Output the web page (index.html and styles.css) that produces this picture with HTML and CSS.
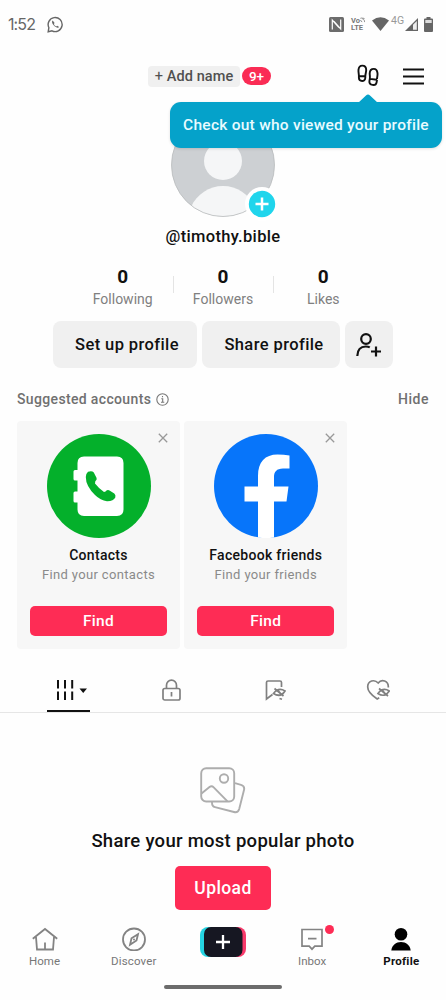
FILE: index.html
```
<!DOCTYPE html>
<html lang="en">
<head>
<meta charset="utf-8">
<title>Profile</title>
<link rel="stylesheet" href="styles.css">
</head>
<body>
<div class="screen">
  <header class="status">
    <div class="status-left">
      <span class="clock">1:52</span>
      <svg width="17" height="17" viewBox="0 0 17 17" fill="none" stroke="#666" stroke-width="1.400"><path d="M1.200 15.700l.7-4A7 7 0 1 1 5 14.800z"/><path d="M5.700 4.600c-1.200.8-.8 2.900 1.200 4.900s4.300 2.900 5.200 1.400l-1.900-1.200-1 .8C8 9.900 7.200 9 6.800 8l.8-.9z" fill="#666" stroke="none"/></svg>
    </div>
    <div class="status-right">
      <svg width="15" height="15" viewBox="0 0 15 15"><rect width="15" height="15" rx="1.500" fill="#6c6c6c"/><path d="M3.300 12.500V3L10 10.500M11.700 2.500V12L5 4.500" fill="none" stroke="#fff" stroke-width="1.200"/></svg>
      <div class="volte"><span>Vo<svg width="5" height="6" viewBox="0 0 6 6" fill="none" stroke="#777" stroke-width="1"><path d="M.5 1l1.500-.5L5.500 4v1.500M.5 3l2 2.500M3 .5l2.500 1"/></svg></span><span>LTE</span></div>
      <svg class="wifi" width="17" height="14" viewBox="0 0 17 14"><path d="M0 3.500Q8.500-3 17 3.500L8.500 14z" fill="#666"/></svg>
      <span class="network">4G</span>
      <svg class="signal" width="13" height="13" viewBox="0 0 13 13"><path d="M0 13L13 0V13z" fill="#666"/><path d="M8 6.800L11.800 3V11.800H8z" fill="#eee"/></svg>
      <svg class="battery" width="9" height="15" viewBox="0 0 9 15"><path d="M2.500 0h4v1.500H8q1 0 1 1V14q0 1-1 1H1q-1 0-1-1V2.500q0-1 1-1h1.500z" fill="#666"/><path d="M1.300 3h6.400v3H1.300z" fill="#ddd"/></svg>
    </div>
  </header>

  <div class="topbar">
    <div class="topbar-name"><span class="add-name"><span class="plus">+</span> Add name</span><span class="count">9+</span></div>
    <div class="topbar-actions">
      <svg width="22" height="24" viewBox="0 0 22 24" fill="none" stroke="#111" stroke-width="1.900"><path d="M1.900 12.200C2 10 1.200 8 1.500 5.600 1.800 3.200 3.200 1.600 5.300 1.600c2.400 0 3.900 2 3.900 4.500 0 2.200-.8 3.400-.9 6.100M1.900 12.200h6.400M1.900 12.200v1.600c0 4.200 6.400 4.200 6.400 0v-1.600"/><path d="M20 15.200c0-2.300.8-3.700.5-6.100-.3-2.400-1.700-4.200-3.700-4.200-2.400 0-4 2-4.100 4.500 0 2.100.5 3.300.1 5.500M12.800 14.900l7.200.9M12.800 14.900l-.4 2.200c-.5 4.300 6.400 5.500 7.200 1.200l.4-2.500"/></svg>
      <svg width="21" height="17" viewBox="0 0 21 17" stroke="#111" stroke-width="2"><path d="M0 1.500h21M0 8.500h21M0 15.500h21"/></svg>
    </div>
    <div class="tooltip">Check out who viewed your profile<svg class="tooltip-arrow" width="20" height="9" viewBox="0 0 20 9"><path d="M0 9L8 1.500Q10-.5 12 1.500L20 9z" fill="#05a2ca"/></svg></div>
  </div>

  <section class="identity">
    <div class="avatar">
      <svg width="104" height="104" viewBox="0 0 104 104"><defs><clipPath id="face"><circle cx="52" cy="52" r="51.500"/></clipPath></defs><g clip-path="url(#face)"><rect width="104" height="104" fill="#cdd0d3"/><circle cx="52" cy="48" r="19" fill="#f5f6f7"/><path d="M20 94C26 81 38 73 52 73S78 81 84 94V106H20z" fill="#f5f6f7"/></g><circle cx="52" cy="52" r="51.500" fill="none" stroke="#b9bbbd" stroke-width=".8"/></svg>
      <svg class="avatar-plus" width="34" height="34" viewBox="0 0 34 34"><circle cx="17" cy="17" r="17" fill="#fff"/><circle cx="17" cy="17" r="13.200" fill="#20d5ec"/><path d="M10.500 17h13M17 10.500v13" stroke="#fff" stroke-width="2.500"/></svg>
    </div>
    <div class="handle">@timothy.bible</div>
    <div class="stats">
      <div class="stat"><b>0</b><span>Following</span></div>
      <div class="stat"><b>0</b><span>Followers</span></div>
      <div class="stat"><b>0</b><span>Likes</span></div>
    </div>
    <div class="actions">
      <div class="btn btn-setup">Set up profile</div>
      <div class="btn btn-share">Share profile</div>
      <div class="btn btn-add"><svg width="26" height="24" viewBox="0 0 26 24" fill="none" stroke="#111" stroke-width="2.200"><circle cx="10" cy="6" r="4.800"/><path d="M1.300 23c.2-6 3.400-9.500 8.500-9.500 1.600 0 2.900.3 4 .9M15 18.500h10M20 13.500v10"/></svg></div>
    </div>
  </section>

  <section class="suggested">
    <div class="suggested-head">
      <span class="suggested-title">Suggested accounts</span>
      <svg width="13" height="13" viewBox="0 0 13 13" fill="none" stroke="#777" stroke-width="1.100"><circle cx="6.500" cy="6.500" r="5.700"/><path d="M5.300 5.800h1.400v3.300M5 9.300h3.300M6.500 3v1.300"/></svg>
      <span class="hide">Hide</span>
    </div>
    <div class="cards">
      <div class="card">
        <svg class="close" width="10" height="10" viewBox="0 0 10 10" stroke="#999" stroke-width="1.300"><path d="M.8.8l8.400 8.400M9.200.8L.8 9.200"/></svg>
        <svg width="104" height="104" viewBox="0 0 104 104"><circle cx="52" cy="52" r="52" fill="#04b02b"/><path d="M37 22.500H70q6.500 0 6.500 6.500V75.500q0 6.500-6.500 6.500H37q-6.500 0-6.500-6.500V68.500H28q-1.500 0-1.500-1.500V59q0-1.500 1.500-1.500H30.500V46.500H28q-1.500 0-1.500-1.500V37.500q0-1.500 1.500-1.500H30.500V29q0-6.500 6.500-6.500z" fill="#fff"/><path d="M41 37.800Q45 36.500 46.800 38.500L49.600 44Q50.200 46 48.300 47.300L48 49.500Q52 54.700 57 58L58.500 57.500Q60.500 55.400 62.500 56.500L67.300 59.500Q69 61 68.300 63.500 66.500 67.300 60 67.200 53.500 66.500 48 61 38.800 52 38.800 43 39 39.500 41 37.800z" fill="#04b02b"/></svg>
        <b class="card-name">Contacts</b>
        <span class="card-sub">Find your contacts</span>
        <div class="find">Find</div>
      </div>
      <div class="card">
        <svg class="close" width="10" height="10" viewBox="0 0 10 10" stroke="#999" stroke-width="1.300"><path d="M.8.8l8.400 8.400M9.200.8L.8 9.200"/></svg>
        <svg width="104" height="104" viewBox="0 0 104 104"><circle cx="52" cy="52" r="52" fill="#0775fa"/><path d="M44 103.500V67.500H30.500V52.500H44V42C44 28 51 20.500 63.500 20.500Q70 20.500 75.500 21.500V34.500H69C62.500 34.500 60 38 60 43V52.500H74.500L72.500 67.500H60V103.500Q52 104.500 44 103.500z" fill="#fff"/></svg>
        <b class="card-name">Facebook friends</b>
        <span class="card-sub">Find your friends</span>
        <div class="find">Find</div>
      </div>
    </div>
  </section>

  <nav class="tabs">
    <div class="tab active"><svg width="34" height="20" viewBox="0 0 34 20" fill="#111"><path d="M1 0h2v8.500H1zM8 0h2v8.500H8zM15.200 0h2v8.500H15.200zM1 11.500h2v8.500H1zM8 11.500h2v8.500H8zM15.200 11.500h2v8.500H15.200zM23.500 8.500h7.500L27.200 13z"/></svg></div>
    <div class="tab"><svg width="19" height="22" viewBox="0 0 19 22" fill="none" stroke="#808080" stroke-width="1.700"><rect x="1" y="9.500" width="17" height="11.500" rx="1.800"/><path d="M4.500 9.500V6.200a5 5 0 0 1 10 0v3.300M9.500 13v4.500"/></svg></div>
    <div class="tab"><svg width="22" height="22" viewBox="0 0 22 22" fill="none" stroke="#808080" stroke-width="1.700"><path d="M17.500 8V3.500q0-1.500-1.500-1.500H4Q2.500 2 2.500 3.500V20L8.500 15.500"/><path d="M9.500 14.500q5-6.500 11.500-2.500-4.500 7-11.500 2.500zM10.500 9.500l9 7.500M14 11.500l3.500 4M15.500 19.500l2.500.8"/></svg></div>
    <div class="tab"><svg width="24" height="22" viewBox="0 0 24 22" fill="none" stroke="#808080" stroke-width="1.700"><path d="M22.300 8.500C22.800 1.500 15.500-.5 12.200 4 8.500 0 1.700 1.500 1.700 8c0 5 5 9 9.500 12l2-1.200"/><path d="M12 14.500q4.800-6.500 11.300-2.500-4.500 7-11.300 2.500zM13 9.500l9 7.500M16.500 11.500l3.500 4"/></svg></div>
  </nav>

  <main class="empty">
    <svg width="46" height="47" viewBox="0 0 46 47" fill="none" stroke="#adadad" stroke-width="1.900"><rect x="1.200" y="1.200" width="33" height="33.300" rx="5"/><circle cx="24" cy="11.500" r="4.200"/><path d="M1.500 26.500L9.500 20q2.200-1.700 4.200.3L27.500 34.300M35 16.200l6 1.700q4 1.200 3 5.200L39.200 42q-1.200 4-5.200 3L15 40.200q-3.200-.8-3-5.200"/></svg>
    <div class="empty-title">Share your most popular photo</div>
    <div class="upload">Upload</div>
  </main>

  <footer class="nav">
    <div class="nav-item"><svg width="26" height="24" viewBox="0 0 26 24" fill="none" stroke="#838383" stroke-width="1.800"><path d="M.8 11.800L13 2l12.200 9.800M4 10l1 12.500h16l1-12.500M13 15.500v7"/></svg><span>Home</span></div>
    <div class="nav-item discover"><svg width="24" height="24" viewBox="0 0 24 24" fill="none" stroke="#838383" stroke-width="1.800"><circle cx="12" cy="12.500" r="11"/><path d="M16 7.200L14.500 13.500 8 17.800 9.500 11.200z"/><circle cx="12" cy="12.500" r="1" fill="#838383" stroke="none"/></svg><span>Discover</span></div>
    <div class="nav-item create"><svg width="46" height="30" viewBox="0 0 46 30"><rect width="38" height="30" rx="8" fill="#25d4e2"/><rect x="8" width="38" height="30" rx="8" fill="#f83a6b"/><rect x="4" width="38.500" height="30" rx="7" fill="#161722"/><path d="M16 15h14M23 8v14" stroke="#fff" stroke-width="2.300"/></svg></div>
    <div class="nav-item inbox"><svg width="22" height="24" viewBox="0 0 22 24" fill="none" stroke="#838383" stroke-width="1.700"><path d="M1 2.500h20v16.700h-7.200L11 22.200 8.200 19.200H1zM7 11.700h8.500"/></svg><span>Inbox</span><i class="dot"></i></div>
    <div class="nav-item current"><svg width="20" height="24" viewBox="0 0 20 24"><circle cx="10" cy="7.200" r="6.300"/><path d="M.3 23.500C1 18 5 15 10 15s9 3 9.700 8.500z"/></svg><span>Profile</span></div>
  </footer>
  <div class="home-bar"></div>
</div>
</body>
</html>
```
FILE: styles.css
```
* { box-sizing: border-box; }
body { margin: 0; background: #fefefe; font-family: Roboto, "Liberation Sans", sans-serif; color: #111; }
svg { display: block; flex: none; }
.screen { width: 446px; height: 1000px; display: flex; flex-direction: column; overflow: hidden; white-space: nowrap; }

.status { height: 48px; padding: 0 13px 0 8px; display: flex; justify-content: space-between; align-items: center; }
.status-left, .status-right { display: flex; align-items: center; }
.status-left { gap: 12px; }
.clock { font: 400 16px/20px Inter, sans-serif; letter-spacing: -.9px; color: #666; width: 27px; }
.volte { display: flex; flex-direction: column; margin-left: 7px; width: 13px; font: 700 7.500px/7.500px Roboto, sans-serif; color: #777; }
.volte span { display: flex; }
.wifi { margin-left: 8px; }
.network { margin: -6px 0 0 2px; width: 14px; font-size: 10.500px; line-height: 12px; color: #999; }
.battery { margin-left: 6px; }

.topbar { position: relative; height: 65px; padding: 0 22px 0 148px; display: flex; justify-content: space-between; }
.topbar-name, .topbar-actions { display: flex; align-items: center; height: 56px; }
.add-name { width: 92px; height: 21px; border-radius: 4px; background: #f0f0f0; font: 500 14.500px/21px Roboto, sans-serif; letter-spacing: .1px; text-align: center; color: #505050; }
.plus { font-weight: 400; }
.count { margin-left: 2px; width: 29px; height: 18px; border-radius: 9px; background: #fa2c55; color: #fff; font-weight: 500; font-size: 13.500px; line-height: 18px; text-align: center; }
.topbar-actions { gap: 24px; }
.tooltip { position: absolute; z-index: 2; left: 170px; top: 54px; width: 272px; height: 46px; border-radius: 11px; background: #05a2ca; color: #e8fbff; font-size: 15.500px; font-weight: 500; letter-spacing: .26px; line-height: 47px; text-align: center; box-shadow: 0 1px 3px rgba(0,0,0,.12); }
.tooltip-arrow { position: absolute; left: 188px; top: -8px; }

.identity { display: flex; flex-direction: column; align-items: center; height: 255px; }
.avatar { position: relative; width: 104px; height: 104px; }
.avatar-plus { position: absolute; left: 73.500px; top: 73.500px; }
.handle { margin-top: 9px; font-size: 16.500px; font-weight: 500; line-height: 22px; letter-spacing: .33px; }
.stats { display: flex; margin-top: 17px; height: 44px; }
.stat { width: 100.300px; display: flex; flex-direction: column; align-items: center; position: relative; }
.stat + .stat { background: linear-gradient(#e4e4e4, #e4e4e4) 0 11px / 1px 17px no-repeat; }
.stat b { font-size: 19px; line-height: 24px; }
.stat span { font-size: 14px; line-height: 20px; color: #808080; }
.actions { display: flex; gap: 5px; margin-top: 12px; }
.btn { height: 47px; border-radius: 8px; background: #f0f0f0; font-size: 16.500px; font-weight: 500; letter-spacing: .4px; line-height: 48px; text-align: center; }
.btn-setup { width: 144px; padding-left: 4px; }
.btn-share { width: 138px; padding-left: 6px; }
.btn-add { width: 48px; display: flex; align-items: center; justify-content: center; }

.suggested { padding: 21px 17px 0; height: 298px; }
.suggested-head { display: flex; align-items: center; height: 20px; color: #707070; font-size: 14px; letter-spacing: .35px; }
.suggested-title { margin-right: 5px; font-weight: 500; }
.hide { margin-left: auto; font-weight: 500; letter-spacing: .55px; }
.cards { display: flex; gap: 4.300px; margin-top: 12px; }
.card { position: relative; width: 163px; height: 228px; padding: 13px 13px 0; display: flex; flex-direction: column; align-items: center; background: #f7f7f7; border-radius: 4px; }
.close { position: absolute; right: 12.500px; top: 12px; }
.card-name { margin-top: 8px; font-size: 14px; line-height: 19px; font-weight: 500; letter-spacing: .3px; }
.card-sub { font-size: 13px; line-height: 19px; letter-spacing: .35px; color: #8a8a8a; }
.find { margin-top: 22px; width: 137px; height: 30px; border-radius: 5px; background: #fe2c55; color: #fff; font-size: 15.500px; font-weight: 500; letter-spacing: .3px; line-height: 30px; text-align: center; }

.tabs { display: flex; height: 47px; padding: 0 17px; border-bottom: 1px solid #e6e6e6; }
.tab { width: 103px; display: flex; justify-content: center; align-items: center; padding-top: 2px; }
.active { background: linear-gradient(#111, #111) 50% 100% / 43px 2px no-repeat; padding-left: 8px; }

.empty { display: flex; flex-direction: column; align-items: center; height: 210px; padding-top: 54px; }
.empty-title { margin-top: 15px; font-size: 18.500px; line-height: 24px; font-weight: 500; letter-spacing: .28px; }
.upload { margin-top: 12.500px; width: 96px; height: 44px; border-radius: 5px; background: #fe2c55; color: #fff; font-size: 17.500px; font-weight: 500; letter-spacing: .4px; line-height: 44px; text-align: center; }

.nav { display: flex; height: 62px; padding-top: 4px; }
.nav-item { position: relative; width: 89.200px; display: flex; flex-direction: column; align-items: center; font-size: 11.500px; line-height: 16px; color: #777; }
.nav-item span { margin-top: 2px; }
.discover { letter-spacing: .15px; }
.dot { position: absolute; left: 57px; top: -2px; width: 9px; height: 9px; border-radius: 50%; background: #fe2c55; }
.current { color: #111; font-weight: 700; letter-spacing: .25px; }
.home-bar { width: 118px; height: 4px; margin: 0 auto; border-radius: 2px; background: #6c6c6c; }
```
